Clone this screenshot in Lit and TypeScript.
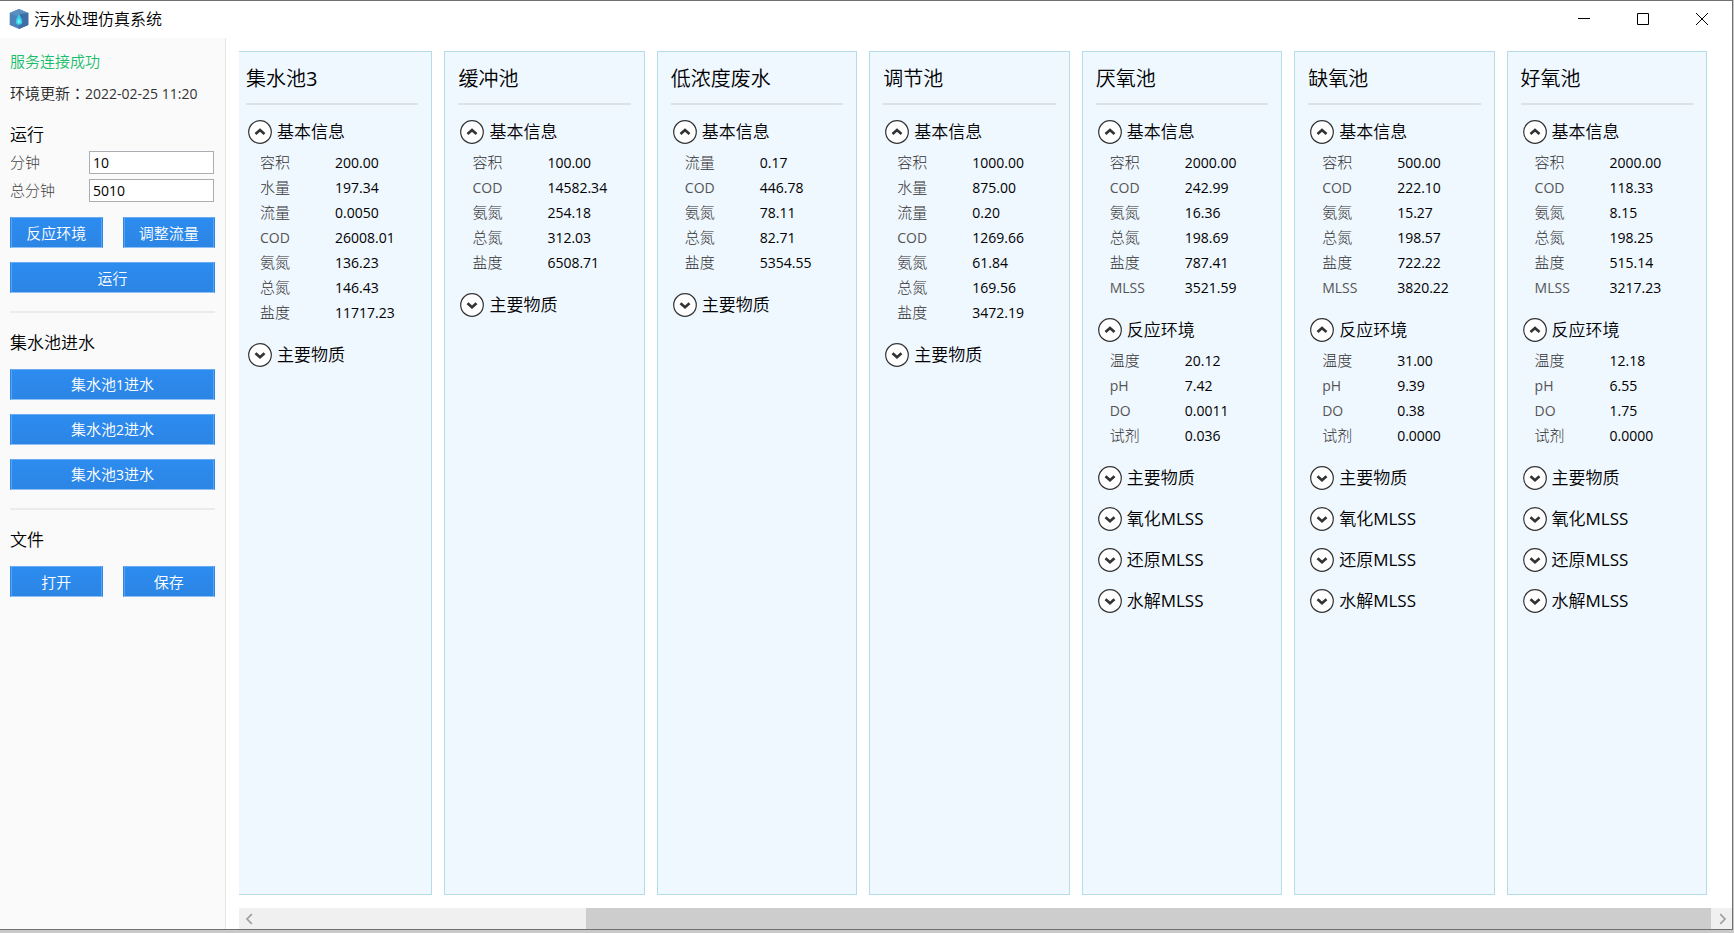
import { LitElement, html, css, svg, nothing } from "lit";
import { customElement, property, state } from "lit/decorators.js";

type Row = [label: string, value: string];
interface Section {
  title: string;
  rows?: Row[];
}
interface Tank {
  name: string;
  sections: Section[];
}

const BASIC = "基本信息";
const ENV = "反应环境";
const MAIN: Section = { title: "主要物质" };
const SLUDGE: Section[] = [MAIN, { title: "氧化MLSS" }, { title: "还原MLSS" }, { title: "水解MLSS" }];

const zip = (labels: string[], values: string[]): Row[] => labels.map((l, i) => [l, values[i]]);

const reactor = (name: string, basic: string[], env: string[]): Tank => ({
  name,
  sections: [
    { title: BASIC, rows: zip(["容积", "COD", "氨氮", "总氮", "盐度", "MLSS"], basic) },
    { title: ENV, rows: zip(["温度", "pH", "DO", "试剂"], env) },
    ...SLUDGE,
  ],
});

const pool = (name: string, labels: string[], values: string[]): Tank => ({
  name,
  sections: [{ title: BASIC, rows: zip(labels, values) }, MAIN],
});

const FULL = ["容积", "水量", "流量", "COD", "氨氮", "总氮", "盐度"];

const TANKS: Tank[] = [
  pool("集水池3", FULL, ["200.00", "197.34", "0.0050", "26008.01", "136.23", "146.43", "11717.23"]),
  pool("缓冲池", ["容积", "COD", "氨氮", "总氮", "盐度"], ["100.00", "14582.34", "254.18", "312.03", "6508.71"]),
  pool("低浓度废水", ["流量", "COD", "氨氮", "总氮", "盐度"], ["0.17", "446.78", "78.11", "82.71", "5354.55"]),
  pool("调节池", FULL, ["1000.00", "875.00", "0.20", "1269.66", "61.84", "169.56", "3472.19"]),
  reactor("厌氧池", ["2000.00", "242.99", "16.36", "198.69", "787.41", "3521.59"], ["20.12", "7.42", "0.0011", "0.036"]),
  reactor("缺氧池", ["500.00", "222.10", "15.27", "198.57", "722.22", "3820.22"], ["31.00", "9.39", "0.38", "0.0000"]),
  reactor("好氧池", ["2000.00", "118.33", "8.15", "198.25", "515.14", "3217.23"], ["12.18", "6.55", "1.75", "0.0000"]),
];

/** Chinese text is set in a lighter weight than the Latin letters and digits inside it. */
const mixed = (text: string) =>
  text
    .split(/([A-Za-z0-9]+)/)
    .filter(Boolean)
    .map((part) => (/^[A-Za-z0-9]/.test(part) ? html`<span class="latin">${part}</span>` : part));

const base = css`
  * {
    box-sizing: border-box;
    margin: 0;
  }
  button,
  input {
    font: inherit;
    color: inherit;
    padding: 0;
  }
  .latin {
    font-weight: 400;
  }
`;

@customElement("info-section")
class InfoSection extends LitElement {
  @property({ attribute: false }) section!: Section;
  @state() private open?: boolean;

  static styles = [
    base,
    css`
      :host {
        display: block;
      }
      .head {
        display: flex;
        align-items: center;
        gap: 5px;
        height: 24px;
        border: 0;
        background: none;
        font-size: 17px;
        line-height: 24px;
        color: #000;
      }
      .arrow {
        display: block;
        width: 24px;
        height: 24px;
      }
      .rows {
        display: grid;
        grid-template-columns: 75px 1fr;
        grid-auto-rows: 25px;
        line-height: 25px;
        font-size: 14px;
        padding: 6px 0 1px 12px;
      }
      .label {
        color: #333;
        font-size: 15px;
        font-weight: 300;
      }
      .label .latin {
        font-size: 14px;
        color: #555;
      }
      .value {
        color: #000;
        font-weight: 400;
      }
    `,
  ];

  render() {
    const { title, rows } = this.section;
    const open = this.open ?? !!rows;
    return html`
      <button class="head" type="button" aria-expanded=${open} @click=${() => (this.open = !open)}>
        <svg class="arrow" viewBox="0 0 24 24" aria-hidden="true">
          <circle cx="12" cy="12" r="11.3" fill="#fff" stroke="#333" stroke-width="1.2" />
          ${open
            ? svg`<path d="M7.500 13.900 12 10l4.500 3.900" fill="none" stroke="#333" stroke-width="2.700" />`
            : svg`<path d="M7.500 10.300 12 14.200l4.500-3.900" fill="none" stroke="#333" stroke-width="2.700" />`}
        </svg>
        <span>${mixed(title)}</span>
      </button>
      ${open && rows
        ? html`<dl class="rows">
            ${rows.map(
              ([label, value]) => html`
                <dt class="label">${mixed(label)}</dt>
                <dd class="value">${value}</dd>
              `,
            )}
          </dl>`
        : nothing}
    `;
  }
}

@customElement("tank-card")
class TankCard extends LitElement {
  @property({ attribute: false }) tank!: Tank;

  static styles = [
    base,
    css`
      :host {
        display: block;
        box-sizing: border-box;
        background: #eff7ff;
        border: 1px solid #b5dde8;
        padding: 13px;
      }
      .name {
        font-size: 20px;
        font-weight: inherit;
        line-height: 28px;
        padding-bottom: 10px;
        border-bottom: 2px solid #dde2e7;
      }
      .sections {
        display: flex;
        flex-direction: column;
        gap: 17px;
        padding: 15px 0 0 2px;
      }
    `,
  ];

  render() {
    return html`
      <h2 class="name">${mixed(this.tank.name)}</h2>
      <div class="sections">
        ${this.tank.sections.map((s) => html`<info-section .section=${s}></info-section>`)}
      </div>
    `;
  }
}

@customElement("app-root")
class AppRoot extends LitElement {
  static styles = [
    base,
    css`
      :host {
        display: block;
        box-sizing: border-box;
        height: 100vh;
        padding: 0 1px 3px 0;
        background: #c9c9c9;
        font-family: "Open Sans", "Noto Sans CJK SC", sans-serif;
        font-weight: 350;
        color: #000;
      }
      .window {
        display: grid;
        grid-template: 37px minmax(0, 1fr) / 226px minmax(0, 1fr);
        height: 100%;
        background: #fff;
        border: 1px solid #707070;
        border-left: 0;
      }
      .titlebar {
        grid-column: 1 / -1;
        display: flex;
        align-items: center;
        gap: 5px;
        padding: 0 1px 2px 9px;
      }
      .logo {
        width: 20px;
        height: 20px;
      }
      .title {
        flex: 1;
        font-size: 16px;
        font-weight: inherit;
        line-height: 24px;
      }
      .controls {
        display: flex;
        align-self: stretch;
      }
      .control {
        width: 59px;
        border: 0;
        background: none;
        display: grid;
        place-items: center;
      }
      .control svg {
        width: 14px;
        height: 14px;
      }
      .side {
        background: #fafafa;
        border-right: 1px solid #e4e4e4;
        padding: 8px 10px;
        font-size: 15px;
      }
      .status {
        line-height: 30px;
        color: #19be6b;
      }
      .updated {
        line-height: 34px;
        color: #222;
      }
      .colon {
        font-family: "Noto Sans CJK TC", sans-serif;
      }
      .num {
        font-size: 14px;
        font-weight: 400;
        color: #333;
      }
      .heading {
        font-size: 17px;
        font-weight: inherit;
        line-height: 24px;
      }
      .run {
        padding-top: 12px;
      }
      .fields {
        display: grid;
        grid-template-columns: 79px 125px;
        row-gap: 5px;
        padding: 4px 0 15px;
        line-height: 23px;
        font-weight: 300;
        color: #444;
      }
      .field {
        height: 23px;
        width: 100%;
        border: 1px solid #abadb3;
        background: #fff;
        color: #000;
        font-size: 14px;
        font-weight: 400;
        padding: 0 3px;
      }
      .actions {
        display: grid;
        grid-template-columns: 1fr 1fr;
        gap: 14px 20px;
      }
      .btn {
        height: 31px;
        line-height: 28px;
        border: 1px solid #2c86e6;
        border-top-color: #69abf0;
        border-bottom-color: #8fc1f6;
        box-shadow: inset 1px 0 #57a3f3, inset -1px 0 #57a3f3;
        background: linear-gradient(#2d8cf0, #2b85e4);
        color: #fff;
      }
      .btn .latin {
        font-size: 14px;
      }
      .wide {
        grid-column: 1 / -1;
      }
      .group {
        margin-top: 18px;
        border-top: 2px solid #ebebeb;
        padding-top: 18px;
      }
      .group .heading {
        margin-bottom: 14px;
      }
      .main {
        display: flex;
        flex-direction: column;
        padding: 13px 0 0 13px;
        min-width: 0;
      }
      .strip {
        flex: 1;
        min-height: 0;
        display: flex;
        justify-content: flex-end;
        overflow: hidden;
      }
      .track {
        flex: 1 0 auto;
        display: grid;
        grid-template-columns: repeat(7, minmax(200px, 1fr));
        gap: 12px;
        margin-left: -7px;
        padding-right: 25px;
      }
      .scrollbar {
        display: flex;
        height: 21px;
        margin-top: 13px;
        background: #f0f0f0;
      }
      .step {
        flex: none;
        width: 21px;
        border: 0;
        background: #f0f0f0;
        display: grid;
        place-items: center;
      }
      .step svg {
        width: 12px;
        height: 12px;
      }
      .rail {
        flex: 1;
        display: flex;
        justify-content: flex-end;
      }
      .thumb {
        width: 77.5%;
        background: #cdcdcd;
      }
    `,
  ];

  private control(label: string, d: string) {
    return html`<button class="control" type="button" aria-label=${label}>
      <svg viewBox="0 0 14 14"><path d=${d} fill="none" stroke="#000" /></svg>
    </button>`;
  }

  private step(label: string, d: string) {
    return html`<button class="step" type="button" aria-label=${label}>
      <svg viewBox="0 0 10 10"><path d=${d} fill="none" stroke="#a0a0a0" stroke-width="1.4" /></svg>
    </button>`;
  }

  render() {
    return html`
      <div class="window">
        <header class="titlebar">
          <svg class="logo" viewBox="0 0 20 20" aria-hidden="true">
            <path d="M10 0 19.300 4v12L10 20 .7 16V4z" fill="#4d82b8" />
            <path d="M10 0 19.300 4 10 8 .7 4z" fill="#5b8fc2" />
            <path d="M10 5 19.300 4v12L10 20z" fill="#3f6ea6" />
            <path d="M10 4.500c.6 2.800 3.300 5.300 3.300 8a3.300 3.300 0 0 1-6.600 0c0-2.700 2.700-5.200 3.300-8z" fill="#35cdeb" />
            <path d="M10 9c.3 1.500 1.600 2.600 1.600 4a1.600 1.600 0 0 1-3.200 0c0-1.400 1.300-2.500 1.600-4z" fill="#6ff0f2" />
          </svg>
          <h1 class="title">污水处理仿真系统</h1>
          <div class="controls">
            ${this.control("最小化", "M1 6.500h12")}
            ${this.control("最大化", "M1.500 1.500h11v11h-11z")}
            ${this.control("关闭", "M1 1l12 12M13 1 1 13")}
          </div>
        </header>

        <aside class="side">
          <p class="status">服务连接成功</p>
          <p class="updated">环境更新<span class="colon">：</span><span class="num">2022-02-25 11:20</span></p>

          <section class="run">
            <h2 class="heading">运行</h2>
            <div class="fields">
              <label for="minutes">分钟</label>
              <input class="field" id="minutes" type="text" value="10" />
              <label for="total">总分钟</label>
              <input class="field" id="total" type="text" value="5010" />
            </div>
            <div class="actions">
              <button class="btn" type="button">反应环境</button>
              <button class="btn" type="button">调整流量</button>
              <button class="btn wide" type="button">运行</button>
            </div>
          </section>

          <section class="group">
            <h2 class="heading">集水池进水</h2>
            <div class="actions">
              ${[1, 2, 3].map((n) => html`<button class="btn wide" type="button">${mixed(`集水池${n}进水`)}</button>`)}
            </div>
          </section>

          <section class="group">
            <h2 class="heading">文件</h2>
            <div class="actions">
              <button class="btn" type="button">打开</button>
              <button class="btn" type="button">保存</button>
            </div>
          </section>
        </aside>

        <main class="main">
          <div class="strip">
            <div class="track">${TANKS.map((t) => html`<tank-card .tank=${t}></tank-card>`)}</div>
          </div>
          <div class="scrollbar">
            ${this.step("向左滚动", "M6.500 1 2.500 5l4 4")}
            <div class="rail"><div class="thumb"></div></div>
            ${this.step("向右滚动", "M3.500 1l4 4-4 4")}
          </div>
        </main>
      </div>
    `;
  }
}
